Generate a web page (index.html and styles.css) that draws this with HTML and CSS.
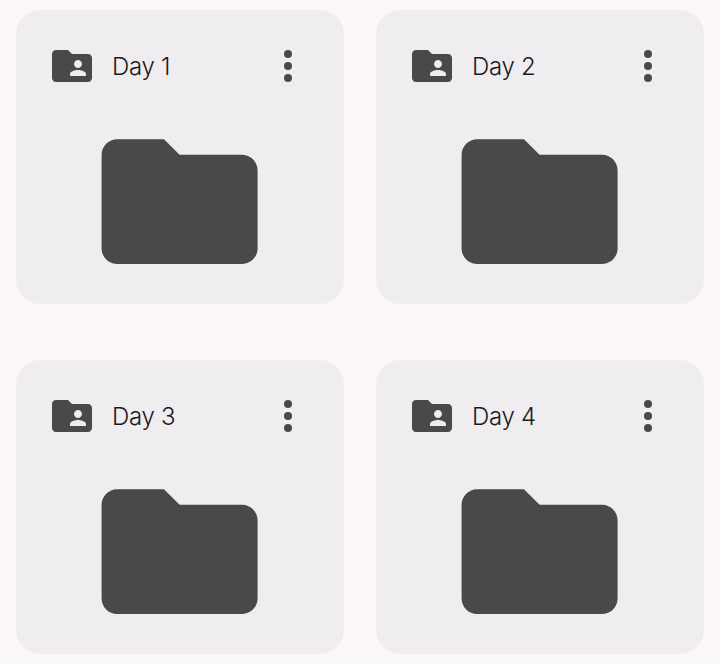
FILE: index.html
```html
<!DOCTYPE html>
<html lang="en">
<head>
  <meta charset="UTF-8">
  <meta name="viewport" content="width=device-width, initial-scale=1.0">
  <title>Days</title>
  <link rel="stylesheet" href="styles.css">
</head>
<body>
  <main class="folder-grid">
    <div class="folder-card">
      <div class="card-header">
        <svg class="card-icon" viewBox="0 0 24 24"><path d="M20 6h-8l-2-2H4c-1.1 0-2 .9-2 2v12c0 1.1.9 2 2 2h16c1.1 0 2-.9 2-2V8c0-1.1-.9-2-2-2zm-5 3c1.1 0 2 .9 2 2s-.9 2-2 2-2-.9-2-2 .9-2 2-2zm4 8h-8v-1c0-1.33 2.67-2 4-2s4 .67 4 2v1z"/></svg>
        <span class="card-title">Day 1</span>
        <svg class="card-icon" viewBox="0 0 24 24"><circle cx="12" cy="6" r="2"/><circle cx="12" cy="12" r="2"/><circle cx="12" cy="18" r="2"/></svg>
      </div>
      <svg class="card-folder" viewBox="0 0 24 24"><path d="M10 4H4c-1.1 0-2 .9-2 2v12c0 1.1.9 2 2 2h16c1.1 0 2-.9 2-2V8c0-1.1-.9-2-2-2h-8l-2-2z"/></svg>
    </div>

    <div class="folder-card">
      <div class="card-header">
        <svg class="card-icon" viewBox="0 0 24 24"><path d="M20 6h-8l-2-2H4c-1.1 0-2 .9-2 2v12c0 1.1.9 2 2 2h16c1.1 0 2-.9 2-2V8c0-1.1-.9-2-2-2zm-5 3c1.1 0 2 .9 2 2s-.9 2-2 2-2-.9-2-2 .9-2 2-2zm4 8h-8v-1c0-1.33 2.67-2 4-2s4 .67 4 2v1z"/></svg>
        <span class="card-title">Day 2</span>
        <svg class="card-icon" viewBox="0 0 24 24"><circle cx="12" cy="6" r="2"/><circle cx="12" cy="12" r="2"/><circle cx="12" cy="18" r="2"/></svg>
      </div>
      <svg class="card-folder" viewBox="0 0 24 24"><path d="M10 4H4c-1.1 0-2 .9-2 2v12c0 1.1.9 2 2 2h16c1.1 0 2-.9 2-2V8c0-1.1-.9-2-2-2h-8l-2-2z"/></svg>
    </div>

    <div class="folder-card">
      <div class="card-header">
        <svg class="card-icon" viewBox="0 0 24 24"><path d="M20 6h-8l-2-2H4c-1.1 0-2 .9-2 2v12c0 1.1.9 2 2 2h16c1.1 0 2-.9 2-2V8c0-1.1-.9-2-2-2zm-5 3c1.1 0 2 .9 2 2s-.9 2-2 2-2-.9-2-2 .9-2 2-2zm4 8h-8v-1c0-1.33 2.67-2 4-2s4 .67 4 2v1z"/></svg>
        <span class="card-title">Day 3</span>
        <svg class="card-icon" viewBox="0 0 24 24"><circle cx="12" cy="6" r="2"/><circle cx="12" cy="12" r="2"/><circle cx="12" cy="18" r="2"/></svg>
      </div>
      <svg class="card-folder" viewBox="0 0 24 24"><path d="M10 4H4c-1.1 0-2 .9-2 2v12c0 1.1.9 2 2 2h16c1.1 0 2-.9 2-2V8c0-1.1-.9-2-2-2h-8l-2-2z"/></svg>
    </div>

    <div class="folder-card">
      <div class="card-header">
        <svg class="card-icon" viewBox="0 0 24 24"><path d="M20 6h-8l-2-2H4c-1.1 0-2 .9-2 2v12c0 1.1.9 2 2 2h16c1.1 0 2-.9 2-2V8c0-1.1-.9-2-2-2zm-5 3c1.1 0 2 .9 2 2s-.9 2-2 2-2-.9-2-2 .9-2 2-2zm4 8h-8v-1c0-1.33 2.67-2 4-2s4 .67 4 2v1z"/></svg>
        <span class="card-title">Day 4</span>
        <svg class="card-icon" viewBox="0 0 24 24"><circle cx="12" cy="6" r="2"/><circle cx="12" cy="12" r="2"/><circle cx="12" cy="18" r="2"/></svg>
      </div>
      <svg class="card-folder" viewBox="0 0 24 24"><path d="M10 4H4c-1.1 0-2 .9-2 2v12c0 1.1.9 2 2 2h16c1.1 0 2-.9 2-2V8c0-1.1-.9-2-2-2h-8l-2-2z"/></svg>
    </div>
  </main>
</body>
</html>
```

FILE: styles.css
```css
body {
  font-family: Inter, Arial, sans-serif;
  margin: 0;
  padding: 0;
  background-color: #fcf8f9;
}

.folder-grid {
  display: grid;
  grid-template-columns: 328px 328px;
  column-gap: 32px;
  row-gap: 56px;
  padding: 10px 16px;
}

.folder-card {
  display: flex;
  flex-direction: column;
  align-items: center;
  height: 294px;
  box-sizing: border-box;
  padding: 32px 32px 0;
  background-color: #efedef;
  border-radius: 24px;
}

.card-header {
  display: flex;
  align-items: center;
  width: 100%;
  height: 48px;
}

.card-icon {
  width: 48px;
  height: 48px;
  flex-shrink: 0;
  fill: #49484a;
}

.card-title {
  flex: 1;
  margin-left: 16px;
  font-size: 24px;
  font-weight: 300;
  letter-spacing: -0.3px;
  color: #1c1b1d;
}

.card-folder {
  width: 187.2px;
  height: 187.2px;
  margin-top: 17.8px;
  flex-shrink: 0;
  fill: #49484a;
}
```
